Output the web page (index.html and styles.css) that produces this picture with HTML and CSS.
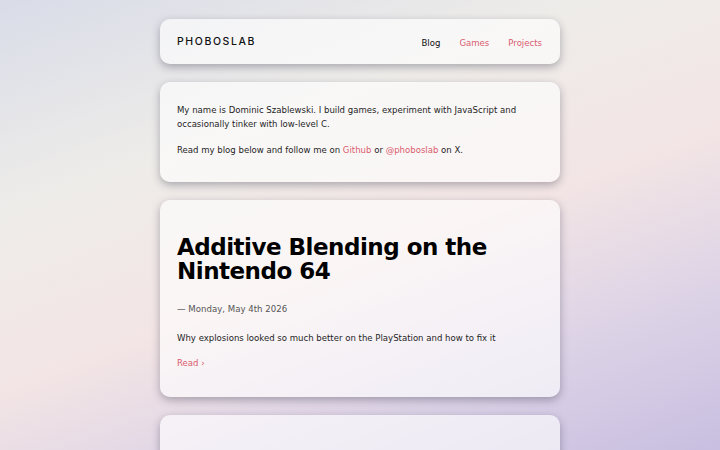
FILE: index.html
```html
<!DOCTYPE html>
<html lang="en">
<head>
    <meta charset="UTF-8">
    <meta name="viewport" content="width=device-width, initial-scale=1.0">
    <title>PhobosLab</title>
    <link rel="stylesheet" href="styles.css">
</head>
<body>
    <div class="page">
        <header class="card header">
            <a href="#" class="logo">PHOBOSLAB</a>
            <nav class="nav">
                <a href="#" class="current">Blog</a>
                <a href="#">Games</a>
                <a href="#">Projects</a>
            </nav>
        </header>

        <section class="card intro">
            <p>My name is Dominic Szablewski. I build games, experiment with JavaScript and occasionally tinker with low-level C.</p>
            <p>Read my blog below and follow me on <a href="#">Github</a> or <a href="#">@phoboslab</a> on X.</p>
        </section>

        <article class="card post">
            <h1>Additive Blending on the Nintendo 64</h1>
            <div class="date">&mdash; Monday, May 4th 2026</div>
            <p>Why explosions looked so much better on the PlayStation and how to fix it</p>
            <a href="#" class="read">Read &rsaquo;</a>
        </article>

        <article class="card post">
            <h1>&nbsp;</h1>
        </article>
    </div>
</body>
</html>
```

FILE: styles.css
```css
html {
    min-height: 100%;
    background: linear-gradient(160deg, #d9dce8 0%, #eeece9 30%, #f3e5e5 55%, #dcd2e6 78%, #c8bfe1 100%) fixed;
}

body {
    margin: 0;
    font-family: "DejaVu Sans", sans-serif;
    font-size: 8.55px;
    line-height: 14px;
    color: #1e1e1e;
}

a {
    color: #d95c6e;
    text-decoration: none;
}

.page {
    width: 400px;
    margin: 0 auto;
    padding-top: 19px;
    display: flex;
    flex-direction: column;
    gap: 18px;
}

.card {
    background: rgba(255, 255, 255, 0.62);
    border-radius: 10px;
    box-shadow: 0 3px 8px rgba(40, 40, 60, 0.35);
    padding: 0 18px 0 17px;
}

.header {
    height: 45px;
    display: flex;
    align-items: center;
    justify-content: space-between;
}

.logo {
    font-family: Inter, "DejaVu Sans", sans-serif;
    font-weight: 500;
    font-size: 10.5px;
    letter-spacing: 1.6px;
    color: #111;
}

.nav {
    display: flex;
    gap: 19px;
    padding-top: 2px;
}

.nav a.current {
    color: #111;
}

.intro {
    padding-top: 21px;
    padding-bottom: 25px;
}

.intro p {
    margin: 0 0 12px;
}

.intro p:last-child {
    margin-bottom: 0;
}

.post {
    padding-top: 35px;
    padding-bottom: 27px;
}

.post h1 {
    font-size: 23px;
    line-height: 24px;
    letter-spacing: -0.5px;
    margin: 0 0 19px;
    color: #000;
}

.date {
    font-size: 8.6px;
    color: #555;
    margin-bottom: 15px;
}

.post p {
    margin: 0 0 11px;
}

.read {
    display: inline-block;
}
```
